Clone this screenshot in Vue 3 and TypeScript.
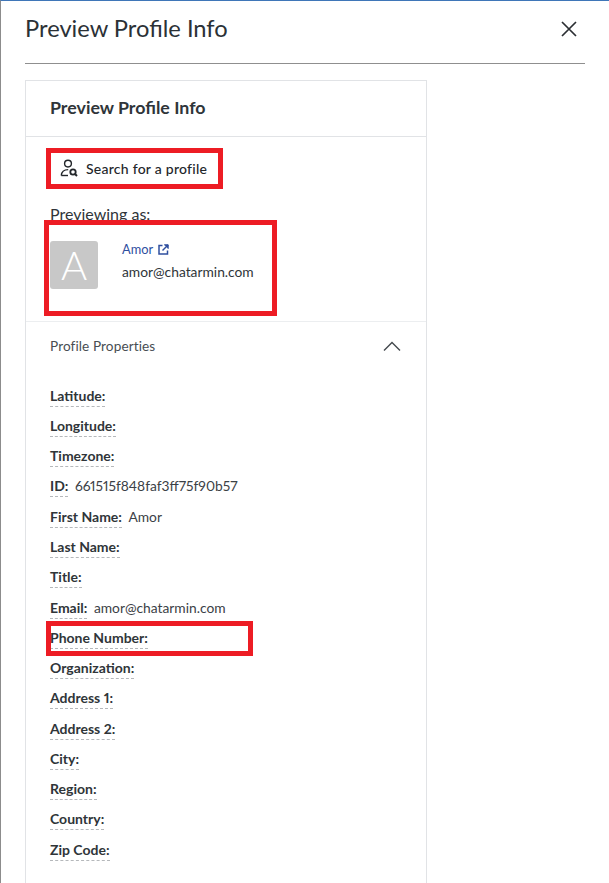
<script setup lang="ts">
interface Prop { label: string; value?: string }
const props: Prop[] = [
  { label: 'Latitude:' },
  { label: 'Longitude:' },
  { label: 'Timezone:' },
  { label: 'ID:', value: '661515f848faf3ff75f90b57' },
  { label: 'First Name:', value: 'Amor' },
  { label: 'Last Name:' },
  { label: 'Title:' },
  { label: 'Email:', value: 'amor@chatarmin.com' },
  { label: 'Phone Number:' },
  { label: 'Organization:' },
  { label: 'Address 1:' },
  { label: 'Address 2:' },
  { label: 'City:' },
  { label: 'Region:' },
  { label: 'Country:' },
  { label: 'Zip Code:' },
]
</script>

<template>
  <div class="page">
    <header class="head">
      <h1 class="title">Preview Profile Info</h1>
      <svg class="close" width="16" height="16" viewBox="0 0 16 16" aria-label="Close">
        <path d="M1 1 L15 15 M15 1 L1 15" stroke="#2b2f33" stroke-width="1.7" fill="none" />
      </svg>
    </header>
    <section class="card">
      <div class="card-head">Preview Profile Info</div>
      <div class="who">
        <div class="search">
          <svg width="18" height="18" viewBox="0 0 18 18" fill="none" stroke="#22262a" stroke-width="1.4">
            <circle cx="8" cy="4.6" r="3.4" />
            <path d="M1.3 16.5 C1.6 12.6 4 10.6 8.2 10.6" />
            <path d="M1.3 16.5 H8" />
            <circle cx="13" cy="13" r="2.7" stroke-width="1.8" />
            <path d="M15 15 L17 17" stroke-width="2" />
          </svg>
          <span>Search for a profile</span>
        </div>
        <div class="previewing">Previewing as:</div>
        <div class="person">
          <div class="avatar">A</div>
          <div class="details">
            <div class="name">
              Amor
              <svg width="11" height="11" viewBox="0 0 11 11" fill="none" stroke="#2f4f9f" stroke-width="1.5">
                <path d="M4.5 1.5 H1 V10 H9.5 V6.5" />
                <path d="M4.5 6.5 L10 1" />
                <path d="M6.2 0.8 H10.2 V4.8" fill="#2f4f9f" stroke-width="1" />
              </svg>
            </div>
            <div class="mail">amor@chatarmin.com</div>
          </div>
        </div>
      </div>
      <div class="props-head">
        <span>Profile Properties</span>
        <svg width="18" height="10" viewBox="0 0 18 10" fill="none" stroke="#43484d" stroke-width="1.4">
          <path d="M1 9.5 L9 1.5 L17 9.5" />
        </svg>
      </div>
      <ul class="props">
        <li v-for="p in props" :key="p.label" class="prop">
          <span class="label">{{ p.label }}</span>
          <span v-if="p.value" class="value">{{ p.value }}</span>
        </li>
      </ul>
    </section>
    <div class="mark mark-search"></div>
    <div class="mark mark-person"></div>
    <div class="mark mark-phone"></div>
  </div>
</template>

<style>
html, body { margin: 0; background: #fff; }
</style>

<style scoped>
.page {
  position: relative;
  box-sizing: border-box;
  width: 609px;
  height: 883px;
  overflow: hidden;
  background: #fff;
  border-top: 1px solid #3f76b8;
  border-left: 1px solid #8c8c8c;
  padding: 0 24px;
  font-family: Lato, "Open Sans", sans-serif;
  color: #2f3539;
  font-variant-numeric: proportional-nums;
}
.head {
  height: 62px;
  display: flex;
  justify-content: space-between;
  align-items: flex-start;
  border-bottom: 1px solid #8f8f8f;
}
.title {
  margin: 11px 0 0;
  font-size: 23.7px;
  line-height: 32px;
  font-weight: 400;
  color: #2b3136;
}
.close { margin: 20px 8px 0 0; }
.card {
  box-sizing: border-box;
  width: 402px;
  height: 830px;
  margin-top: 16px;
  border: 1px solid #e1e3e6;
}
.card-head {
  height: 56px;
  box-sizing: border-box;
  padding: 15px 24px 0;
  border-bottom: 1px solid #e1e3e6;
  font-size: 17.8px;
  line-height: 22px;
  font-weight: 700;
}
.who {
  height: 185px;
  box-sizing: border-box;
  padding: 0 24px;
  border-bottom: 1px solid #eceef0;
}
.search {
  display: flex;
  align-items: center;
  gap: 8px;
  height: 32px;
  padding: 15px 0 0 10px;
  font-size: 14px;
  font-weight: 500;
  color: #22262a;
  letter-spacing: 0.25px;
}
.previewing {
  margin-top: 20px;
  font-size: 16px;
  line-height: 20px;
}
.person {
  display: flex;
  gap: 24px;
  margin-top: 17px;
}
.avatar {
  width: 48px;
  height: 48px;
  border-radius: 3px;
  background: #c8c8c8;
  color: #fff;
  font-size: 40px;
  font-weight: 300;
  line-height: 48px;
  text-align: center;
}
.details { margin-top: -1px; }
.name {
  display: flex;
  align-items: center;
  gap: 5px;
  font-size: 12.8px;
  line-height: 18px;
  color: #2f4f9f;
}
.mail {
  margin-top: 4px;
  font-size: 13.8px;
  line-height: 20px;
}
.props-head {
  display: flex;
  justify-content: space-between;
  align-items: center;
  height: 48px;
  padding: 0 25px 0 24px;
  font-size: 13.6px;
  color: #484e53;
  letter-spacing: 0.1px;
}
.props {
  list-style: none;
  margin: 15.7px 0 0;
  padding: 0 0 0 24px;
}
.prop {
  height: 30.27px;
  display: flex;
  align-items: flex-start;
  gap: 6.5px;
  font-size: 14px;
  line-height: 20px;
}
.label {
  font-weight: 700;
  border-bottom: 1px dashed #b5b8bb;
}
.value { color: #3b4146; font-size: 13.8px; }
.mark {
  position: absolute;
  box-sizing: border-box;
  border: 5px solid #ed1c24;
}
.mark-search { left: 45px; top: 147px; width: 177px; height: 41px; }
.mark-person { left: 43px; top: 219px; width: 233px; height: 96px; }
.mark-phone { left: 45px; top: 620px; width: 207px; height: 35px; }
</style>
